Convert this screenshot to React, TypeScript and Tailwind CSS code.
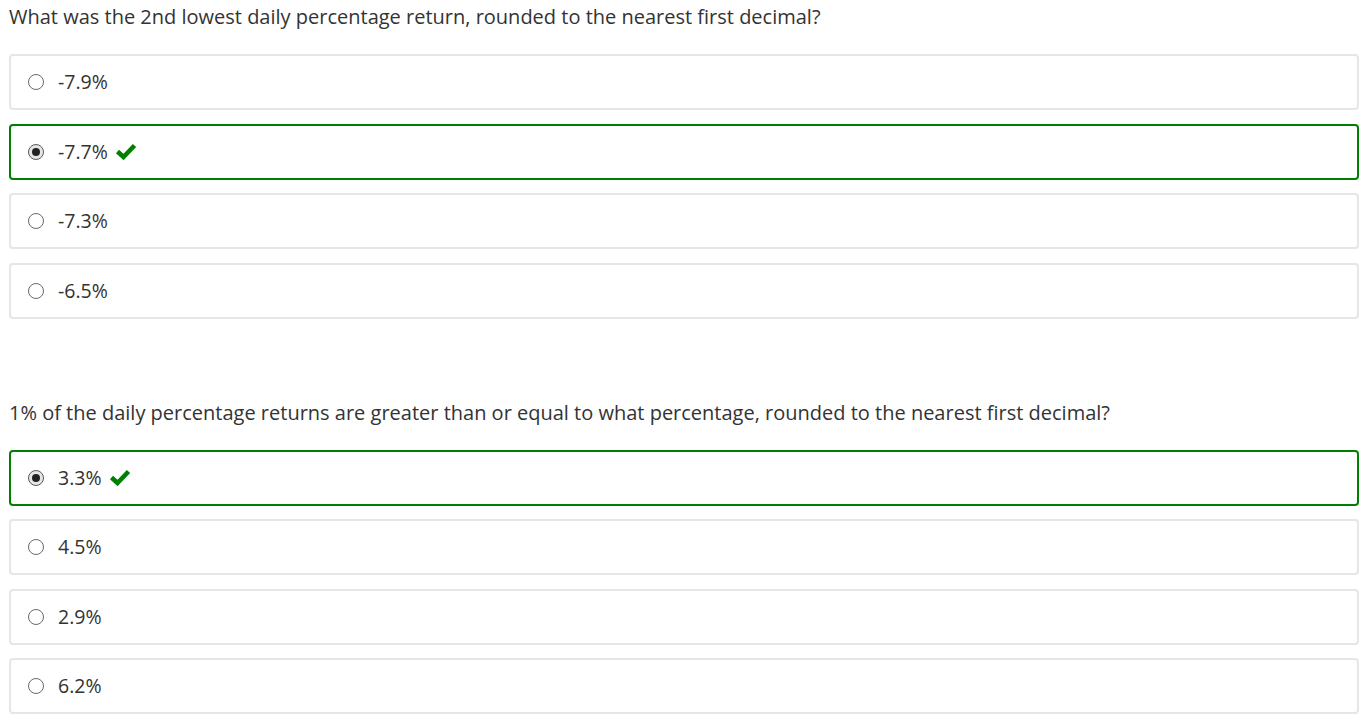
type Option = {
  label: string;
  selected?: boolean;
};

interface QuestionProps {
  prompt: string;
  options: Option[];
}

const Radio = ({ checked }: { checked?: boolean }) => {
  if (checked) {
    return (
      <span className="w-[16px] h-[16px] rounded-full border-[1.5px] border-[#5a5a5a] bg-[#e6e6e6] flex items-center justify-center shrink-0">
        <span className="w-[8px] h-[8px] rounded-full bg-[#222]" />
      </span>
    );
  }
  return <span className="w-[16px] h-[16px] rounded-full border-[1.5px] border-[#6a6a6a] bg-white shrink-0" />;
};

// heavy check mark, like the old icon font one
const Check = () => (
  <svg width="22" height="17" viewBox="0 0 22 17" className="ml-[7px] shrink-0">
    <path d="M2.5 8.5 L8.5 14 L19.5 2.5" fill="none" stroke="#008000" strokeWidth="4.6" strokeLinejoin="miter" />
  </svg>
);

const Question = ({ prompt, options }: QuestionProps) => {
  return (
    <div className="flex flex-col">
      <div className="h-[34px] flex items-center text-[20px] text-[#333]">{prompt}</div>
      <div className="flex flex-col gap-[13.5px] mt-[20px]">
        {options.map((o) => (
          <div
            key={o.label}
            className={`h-[56px] rounded-[4px] border-2 flex items-center pl-[17px] bg-white ${
              o.selected ? 'border-[#008000]' : 'border-[#e6e6e6]'
            }`}
          >
            <Radio checked={o.selected} />
            <span className="ml-[14px] text-[19.5px] text-[#333]">{o.label}</span>
            {o.selected && <Check />}
          </div>
        ))}
      </div>
    </div>
  );
};

export default function App() {
  return (
    <div className="w-[1372px] h-[724px] bg-white pl-[9px] font-['Open_Sans',sans-serif] overflow-hidden">
      <div className="w-[1350px] flex flex-col">
        <Question
          prompt="What was the 2nd lowest daily percentage return, rounded to the nearest first decimal?"
          options={[
            { label: '-7.9%' },
            { label: '-7.7%', selected: true },
            { label: '-7.3%' },
            { label: '-6.5%' },
          ]}
        />
        <div className="mt-[77px]">
          <Question
            prompt="1% of the daily percentage returns are greater than or equal to what percentage, rounded to the nearest first decimal?"
            options={[
              { label: '3.3%', selected: true },
              { label: '4.5%' },
              { label: '2.9%' },
              { label: '6.2%' },
            ]}
          />
        </div>
      </div>
    </div>
  );
}
